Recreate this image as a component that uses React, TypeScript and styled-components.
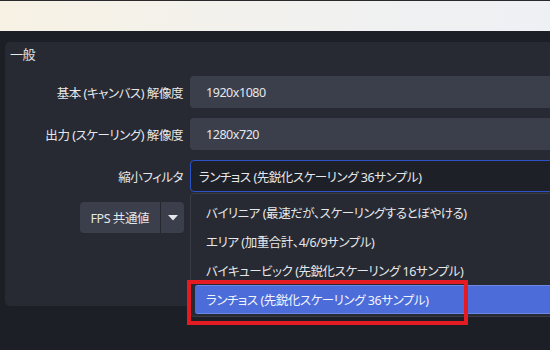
import React from "react";
import styled, { createGlobalStyle } from "styled-components";

const Global = createGlobalStyle`
  html, body { margin: 0; padding: 0; }
  body {
    width: 550px;
    height: 350px;
    overflow: hidden;
    background: #1d1f26;
    font-family: "Noto Sans", "Noto Sans CJK JP", sans-serif;
    font-feature-settings: "palt";
    color: #e6e7ea;
    font-size: 12.5px;
    letter-spacing: -0.45px;
  }
`;

const TopBand = styled.div`
  height: 30px;
  border-top: 1px solid #2a2a2c;
  background: linear-gradient(90deg, #f7f2e4 0%, #f1f1ef 55%, #eef0f4 100%);
`;

const Stage = styled.div`
  position: relative;
  padding: 11px 0 0 5px;
  height: 308px;
`;

const Panel = styled.section`
  width: 560px;
  height: 264px;
  background: #272a33;
  border-radius: 5px;
  box-sizing: border-box;
  padding: 5px 0 0 5px;
`;

const Title = styled.div`
  font-size: 13px;
  line-height: 14px;
  height: 14px;
`;

const Form = styled.div`
  display: grid;
  grid-template-columns: 173px 1fr;
  column-gap: 7px;
  row-gap: 10px;
  margin-top: 15px;
  align-items: center;
`;

const Label = styled.div`
  text-align: right;
  white-space: nowrap;
`;

const Field = styled.div`
  height: 32px;
  box-sizing: border-box;
  background: #3b3e4b;
  border-radius: 4px;
  padding-left: 16px;
  display: flex;
  align-items: center;
`;

const SelectBox = styled(Field)`
  background: #1e2028;
  border: 1px solid #2d52c8;
  padding-left: 8px;
  height: 32px;
`;

const ButtonCell = styled.div`
  display: flex;
  justify-content: flex-end;
  margin-right: -1px;
`;

const SplitButton = styled.div`
  display: flex;
  height: 31px;
  background: #3b3e4b;
  border-radius: 4px;
  overflow: hidden;
`;

const ButtonMain = styled.div`
  display: flex;
  align-items: center;
  padding: 0 11px 0 10px;
  border-right: 1px solid #25272f;
`;

const ButtonArrow = styled.div`
  width: 23px;
  display: flex;
  align-items: center;
  justify-content: center;
`;

const Dropdown = styled.ul`
  position: absolute;
  left: 190px;
  top: 162px;
  width: 380px;
  margin: 0;
  list-style: none;
  box-sizing: border-box;
  border: 1px solid #393c47;
  border-radius: 4px;
  background: #272a33;
  padding: 4px 4px 2px 4px;
`;

const Item = styled.li<{ $active?: boolean }>`
  height: 29px;
  box-sizing: border-box;
  display: flex;
  align-items: center;
  padding-left: 11px;
  white-space: nowrap;
  border-radius: 3px;
  background: ${(p) => (p.$active ? "#4b6cd9" : "transparent")};
  border-top: 1px solid ${(p) => (p.$active ? "#6a88e4" : "transparent")};
  border-bottom: 1px solid ${(p) => (p.$active ? "#6a88e4" : "transparent")};
  color: ${(p) => (p.$active ? "#f2f4fb" : "#e6e7ea")};
`;

const Highlight = styled.div`
  position: absolute;
  left: 187px;
  top: 249px;
  width: 281px;
  height: 45px;
  box-sizing: border-box;
  border: 4px solid #e51b24;
  pointer-events: none;
`;

const items = [
  "バイリニア (最速だが、スケーリングするとぼやける)",
  "エリア (加重合計、4/6/9サンプル)",
  "バイキュービック (先鋭化スケーリング 16サンプル)",
  "ランチョス (先鋭化スケーリング 36サンプル)",
];

export default function App() {
  return (
    <>
      <Global />
      <TopBand />
      <Stage>
        <Panel>
          <Title>一般</Title>
          <Form>
            <Label>基本 (キャンバス) 解像度</Label>
            <Field>1920x1080</Field>
            <Label>出力 (スケーリング) 解像度</Label>
            <Field>1280x720</Field>
            <Label>縮小フィルタ</Label>
            <SelectBox>ランチョス (先鋭化スケーリング 36サンプル)</SelectBox>
            <ButtonCell>
              <SplitButton>
                <ButtonMain>FPS 共通値</ButtonMain>
                <ButtonArrow>
                  <svg width="10" height="6" viewBox="0 0 10 6">
                    <path d="M0 0 L10 0 L5 5.5 Z" fill="#e6e7ea" />
                  </svg>
                </ButtonArrow>
              </SplitButton>
            </ButtonCell>
            <div />
          </Form>
        </Panel>
        <Dropdown>
          {items.map((t, i) => (
            <Item key={t} $active={i === 3}>
              {t}
            </Item>
          ))}
        </Dropdown>
        <Highlight />
      </Stage>
    </>
  );
}
